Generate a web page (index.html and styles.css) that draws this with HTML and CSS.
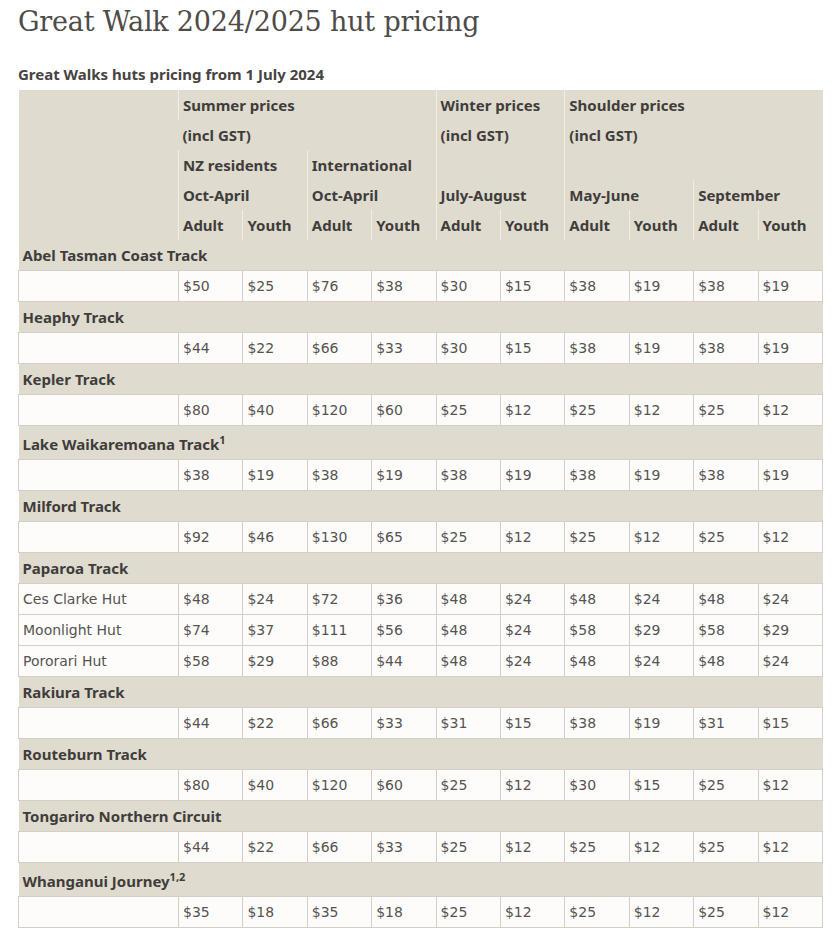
FILE: index.html
```html
<!DOCTYPE html>
<html lang="en">
<head>
<meta charset="utf-8">
<title>Great Walk 2024/2025 hut pricing</title>
<link rel="stylesheet" href="styles.css">
</head>
<body>
<main class="page">
  <h1 class="title">Great Walk 2024/2025 hut pricing</h1>
  <h2 class="subtitle">Great Walks huts pricing from 1 July 2024</h2>
  <table class="prices">
    <colgroup>
      <col class="c-name">
      <col><col><col><col><col><col><col><col><col><col>
    </colgroup>
    <thead>
      <tr>
        <th rowspan="5"></th>
        <th colspan="4" class="bl">Summer prices</th>
        <th colspan="2" class="bl">Winter prices</th>
        <th colspan="4" class="bl">Shoulder prices</th>
      </tr>
      <tr>
        <th colspan="4">(incl GST)</th>
        <th colspan="2" class="bl">(incl GST)</th>
        <th colspan="4" class="bl">(incl GST)</th>
      </tr>
      <tr>
        <th colspan="2" class="bl">NZ residents</th>
        <th colspan="2" class="bl">International</th>
        <th colspan="2" class="bl"></th>
        <th colspan="4" class="bl"></th>
      </tr>
      <tr>
        <th colspan="2" class="bl">Oct-April</th>
        <th colspan="2" class="bl">Oct-April</th>
        <th colspan="2" class="bl">July-August</th>
        <th colspan="2" class="bl">May-June</th>
        <th colspan="2" class="bl">September</th>
      </tr>
      <tr>
        <th class="bl">Adult</th><th class="bl">Youth</th>
        <th class="bl">Adult</th><th class="bl">Youth</th>
        <th class="bl">Adult</th><th class="bl">Youth</th>
        <th class="bl">Adult</th><th class="bl">Youth</th>
        <th class="bl">Adult</th><th class="bl">Youth</th>
      </tr>
    </thead>
    <tbody>
      <tr class="track"><td colspan="11">Abel Tasman Coast Track</td></tr>
      <tr class="data"><td></td><td>$50</td><td>$25</td><td>$76</td><td>$38</td><td>$30</td><td>$15</td><td>$38</td><td>$19</td><td>$38</td><td>$19</td></tr>

      <tr class="track"><td colspan="11">Heaphy Track</td></tr>
      <tr class="data"><td></td><td>$44</td><td>$22</td><td>$66</td><td>$33</td><td>$30</td><td>$15</td><td>$38</td><td>$19</td><td>$38</td><td>$19</td></tr>

      <tr class="track"><td colspan="11">Kepler Track</td></tr>
      <tr class="data"><td></td><td>$80</td><td>$40</td><td>$120</td><td>$60</td><td>$25</td><td>$12</td><td>$25</td><td>$12</td><td>$25</td><td>$12</td></tr>

      <tr class="track note"><td colspan="11">Lake Waikaremoana Track<sup>1</sup></td></tr>
      <tr class="data"><td></td><td>$38</td><td>$19</td><td>$38</td><td>$19</td><td>$38</td><td>$19</td><td>$38</td><td>$19</td><td>$38</td><td>$19</td></tr>

      <tr class="track"><td colspan="11">Milford Track</td></tr>
      <tr class="data"><td></td><td>$92</td><td>$46</td><td>$130</td><td>$65</td><td>$25</td><td>$12</td><td>$25</td><td>$12</td><td>$25</td><td>$12</td></tr>

      <tr class="track"><td colspan="11">Paparoa Track</td></tr>
      <tr class="data"><td>Ces Clarke Hut</td><td>$48</td><td>$24</td><td>$72</td><td>$36</td><td>$48</td><td>$24</td><td>$48</td><td>$24</td><td>$48</td><td>$24</td></tr>
      <tr class="data"><td>Moonlight Hut</td><td>$74</td><td>$37</td><td>$111</td><td>$56</td><td>$48</td><td>$24</td><td>$58</td><td>$29</td><td>$58</td><td>$29</td></tr>
      <tr class="data"><td>Pororari Hut</td><td>$58</td><td>$29</td><td>$88</td><td>$44</td><td>$48</td><td>$24</td><td>$48</td><td>$24</td><td>$48</td><td>$24</td></tr>

      <tr class="track"><td colspan="11">Rakiura Track</td></tr>
      <tr class="data"><td></td><td>$44</td><td>$22</td><td>$66</td><td>$33</td><td>$31</td><td>$15</td><td>$38</td><td>$19</td><td>$31</td><td>$15</td></tr>

      <tr class="track"><td colspan="11">Routeburn Track</td></tr>
      <tr class="data"><td></td><td>$80</td><td>$40</td><td>$120</td><td>$60</td><td>$25</td><td>$12</td><td>$30</td><td>$15</td><td>$25</td><td>$12</td></tr>

      <tr class="track"><td colspan="11">Tongariro Northern Circuit</td></tr>
      <tr class="data"><td></td><td>$44</td><td>$22</td><td>$66</td><td>$33</td><td>$25</td><td>$12</td><td>$25</td><td>$12</td><td>$25</td><td>$12</td></tr>

      <tr class="track note"><td colspan="11">Whanganui Journey<sup>1,2</sup></td></tr>
      <tr class="data"><td></td><td>$35</td><td>$18</td><td>$35</td><td>$18</td><td>$25</td><td>$12</td><td>$25</td><td>$12</td><td>$25</td><td>$12</td></tr>
    </tbody>
  </table>
</main>
</body>
</html>
```

FILE: styles.css
```css
html, body {
  margin: 0;
  padding: 0;
  background: #ffffff;
}

.page {
  padding: 0 18px;
  color: #444240;
  font-family: "Noto Sans", "DejaVu Sans", sans-serif;
}

.title {
  margin: 0;
  padding-top: 5px;
  font-family: "DejaVu Serif", serif;
  font-weight: normal;
  font-size: 27px;
  line-height: 34px;
  color: #4e4b48;
  letter-spacing: -0.2px;
}

.subtitle {
  margin: 25px 0 6px;
  font-size: 15px;
  line-height: 20px;
  font-weight: bold;
  color: #464442;
}

.prices {
  width: 805px;
  border-collapse: collapse;
  table-layout: fixed;
  font-size: 15px;
}

.c-name {
  width: 160px;
}

.prices th {
  background: #dfdbcf;
  text-align: left;
  font-weight: bold;
  color: #3f3d3b;
  height: 30px;
  padding: 0 4px;
  line-height: 30px;
  border: none;
  white-space: nowrap;
}

.prices th.bl {
  border-left: 1px solid #f1eee7;
}

.track td {
  background: #dfdbcf;
  font-weight: bold;
  color: #3f3d3b;
  height: 30px;
  padding: 0 4px;
  line-height: 30px;
}

.track.note td {
  height: 30px;
  padding-top: 3px;
}

.track sup {
  font-size: 11px;
  line-height: 0;
  vertical-align: 6px;
}

.data td {
  background: #fdfcfb;
  border: 1px solid #d3cfc7;
  height: 30px;
  padding: 0 4px;
  line-height: 30px;
  color: #555352;
  font-family: "DejaVu Sans", "Noto Sans", sans-serif;
  font-size: 14px;
  white-space: nowrap;
}
```
